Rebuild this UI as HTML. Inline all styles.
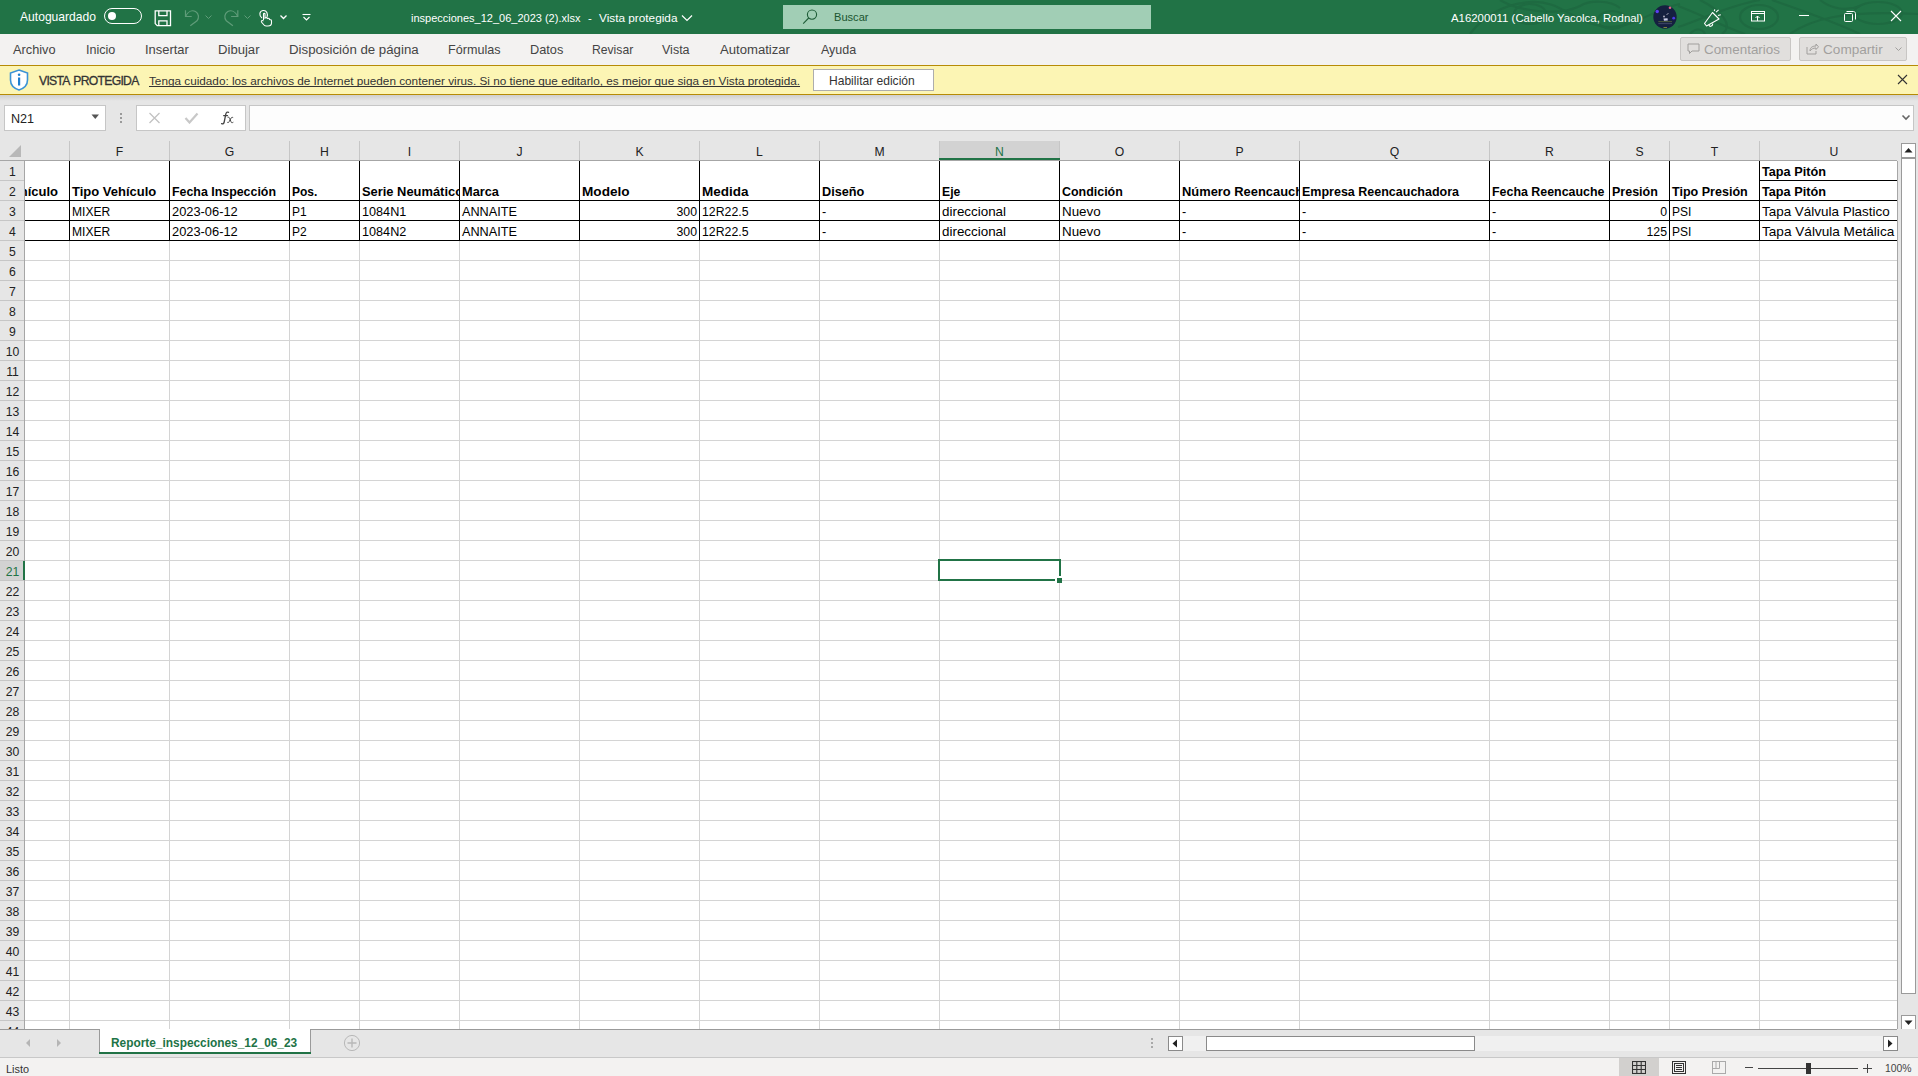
<!DOCTYPE html>
<html><head><meta charset="utf-8"><style>
html,body{margin:0;padding:0;}
body{width:1918px;height:1076px;position:relative;overflow:hidden;background:#fff;font-family:"Liberation Sans", sans-serif;}
.r{position:absolute;box-sizing:content-box;}
.t{position:absolute;white-space:nowrap;line-height:1;}
svg.r{display:block;}
</style></head><body>
<div class="r" style="left:0px;top:0px;width:1918px;height:34px;background:#217346;"></div>
<svg class="r" style="left:0;top:0" width="1918" height="34" viewBox="0 0 1918 34"><g fill="none" stroke="#1e6a41" stroke-width="2.2" opacity="0.9">
<path d="M1470 34 C1480 20 1500 4 1530 2 C1560 0 1570 20 1600 26 C1630 32 1650 10 1680 4"/>
<path d="M1500 0 C1520 12 1560 16 1580 6 C1590 0 1610 0 1620 8"/>
<ellipse cx="1530" cy="14" rx="16" ry="10"/>
<ellipse cx="1612" cy="20" rx="14" ry="9"/>
<path d="M1678 6 C1700 14 1722 26 1745 34"/>
<path d="M1772 0 C1800 10 1830 20 1860 34"/>
<ellipse cx="1759" cy="17" rx="19" ry="12"/>
<ellipse cx="1878" cy="13" rx="24" ry="11"/>
<path d="M1678 27 C1700 20 1730 5 1760 0"/>
<path d="M1790 34 C1810 20 1840 10 1918 14"/>
<path d="M1700 0 C1720 10 1735 25 1722 34"/>
<path d="M1820 0 C1830 8 1845 12 1860 6"/>
<path d="M1690 34 C1695 28 1702 28 1705 34"/>
</g></svg>
<div class="t" style="left:20px;top:11.00px;font-size:12.1px;color:#fff;font-weight:normal;">Autoguardado</div>
<div class="r" style="left:104px;top:8px;width:36px;height:14px;border:1px solid #fff;border-radius:8px;"></div>
<div class="r" style="left:108px;top:12px;width:8px;height:8px;background:#fff;border-radius:50%;"></div>
<svg class="r" style="left:154px;top:10px" width="18" height="17" viewBox="0 0 18 17"><g fill="none" stroke="#fff" stroke-width="1.3">
<path d="M1.2 0.8 H16.5 V15.6 H3.2 L1.2 13.6 Z"/><path d="M4.8 0.8 V5.6 H13 V0.8"/><path d="M4.8 15.6 V10.8 H13 V15.6"/></g></svg>
<svg class="r" style="left:183px;top:9px" width="18" height="18" viewBox="0 0 18 18"><g fill="none" stroke="#5f9c79" stroke-width="1.2">
<path d="M2.5 1.3 V7.5 H8.7"/><path d="M2.5 7.5 C5 2.5 9 0.8 12.5 2.5 C16 4.5 16.3 9 14 11.8 L7.3 16.8"/></g></svg>
<svg class="r" style="left:204px;top:14px" width="9" height="6" viewBox="0 0 9 6"><path d="M1.5 1.5 L4.5 4.5 L7.5 1.5" fill="none" stroke="#5f9c79" stroke-width="1"/></svg>
<svg class="r" style="left:222px;top:9px" width="18" height="18" viewBox="0 0 18 18"><g fill="none" stroke="#5f9c79" stroke-width="1.2">
<path d="M15.8 1.3 V7.5 H9.1"/><path d="M15.8 7.5 C13.3 2.5 9.3 0.8 5.8 2.5 C2.3 4.5 2 9 4.3 11.8 L10.9 16.8"/></g></svg>
<svg class="r" style="left:243px;top:14px" width="9" height="6" viewBox="0 0 9 6"><path d="M1.5 1.5 L4.5 4.5 L7.5 1.5" fill="none" stroke="#5f9c79" stroke-width="1"/></svg>
<svg class="r" style="left:258px;top:9px" width="15" height="18" viewBox="0 0 15 18"><g fill="none" stroke="#fff" stroke-width="1.1">
<path d="M4 9 C1 7 1 2 5 1.5 C9 1 10 5 9 8"/><path d="M5.5 11 V5 C5.5 4 7 4 7 5 V9 C8 8.5 9 8.5 9.5 9.5 C10.5 9 11.5 9.5 11.5 10.5 C12.5 10.3 13.5 11 13.5 12 V14 C13.5 16 12 17 10 17 H8 C6 17 5 15 3.5 13 C3 12 4 11 5.5 12"/></g></svg>
<svg class="r" style="left:279px;top:14px" width="9" height="6" viewBox="0 0 9 6"><path d="M1.5 1.5 L4.5 4.5 L7.5 1.5" fill="none" stroke="#fff" stroke-width="1.3"/></svg>
<svg class="r" style="left:302px;top:13px" width="9" height="9" viewBox="0 0 9 9"><g fill="none" stroke="#fff" stroke-width="1.1"><path d="M0.5 1.5 H8.5"/><path d="M1.5 4 L4.5 7 L7.5 4"/></g></svg>
<div class="t" style="left:411px;top:13.00px;font-size:11.0px;color:#fff;font-weight:normal;">inspecciones_12_06_2023 (2).xlsx</div>
<div class="t" style="left:588px;top:13.00px;font-size:11.5px;color:#fff;font-weight:normal;">-</div>
<div class="t" style="left:599px;top:13.00px;font-size:11.8px;color:#fff;font-weight:normal;">Vista protegida</div>
<svg class="r" style="left:681px;top:14px" width="12" height="8" viewBox="0 0 12 8"><path d="M1 1.5 L6 6.5 L11 1.5" fill="none" stroke="#fff" stroke-width="1.2"/></svg>
<div class="r" style="left:783px;top:5px;width:368px;height:24px;background:#a1ceb5;"></div>
<svg class="r" style="left:802px;top:8px" width="16" height="17" viewBox="0 0 16 17"><g fill="none" stroke="#1e5c37" stroke-width="1.1"><circle cx="10" cy="6.6" r="4.6"/><path d="M6.7 10 L1.2 15.6"/></g></svg>
<div class="t" style="left:834px;top:12.00px;font-size:11.1px;color:#1a5530;font-weight:normal;">Buscar</div>
<div class="t" style="left:1451px;top:13.00px;font-size:11.4px;color:#fff;font-weight:normal;">A16200011 (Cabello Yacolca, Rodnal)</div>
<svg class="r" style="left:1653px;top:5px" width="24" height="24" viewBox="0 0 24 24"><circle cx="12" cy="12" r="11.7" fill="#152040"/><circle cx="4.2" cy="6.5" r="1.7" fill="#5b3df2"/><circle cx="17" cy="2.8" r="1.3" fill="#e06585"/><circle cx="20.7" cy="13.2" r="1.4" fill="#4a3ae8"/><path d="M10.5 13.5 L14.5 13.2 L14.8 15.5 L11 15.8 Z" fill="#c8cbe8"/><circle cx="11" cy="11.5" r="1" fill="#aab"/><path d="M13.5 10 L15.5 8" stroke="#bbc" stroke-width="0.8"/><rect x="5.3" y="16.3" width="13.7" height="0.8" fill="#5a6a38"/><rect x="5.3" y="18.3" width="13.7" height="0.8" fill="#4a5070"/><rect x="10.5" y="22" width="3.5" height="0.9" fill="#8a9040"/></svg>
<svg class="r" style="left:1703px;top:9px" width="18" height="18" viewBox="0 0 18 18"><g fill="none" stroke="#fff" stroke-width="1.1">
<path d="M1.5 14.5 L9.5 3.5 L16 10 L3.5 17 Z" stroke-linejoin="round"/><path d="M6 15.8 C6 18 9.5 18 9.8 14.6"/><path d="M13 3.2 L15.6 0.8"/><path d="M15 6.5 L17.8 5.8"/><path d="M11.3 2 L11.8 0.3"/></g></svg>
<svg class="r" style="left:1751px;top:11px" width="14" height="11" viewBox="0 0 14 11"><g fill="none" stroke="#fff" stroke-width="1"><rect x="0.5" y="0.5" width="13" height="9.5"/><path d="M0.5 2.5 H13.5"/><path d="M6.5 10 V5 M4.5 7 L6.5 5 L8.5 7"/></g></svg>
<div class="r" style="left:1799px;top:15px;width:10px;height:1px;background:#fff;"></div>
<svg class="r" style="left:1844px;top:11px" width="12" height="11" viewBox="0 0 12 11"><g fill="none" stroke="#fff" stroke-width="1"><rect x="0.5" y="2.5" width="8" height="8" rx="1"/><path d="M2.5 0.5 H9.5 C10.5 0.5 11.5 1.5 11.5 2.5 V8.5"/></g></svg>
<svg class="r" style="left:1890px;top:10px" width="12" height="12" viewBox="0 0 12 12"><g stroke="#fff" stroke-width="1.1"><path d="M1 1 L11 11 M11 1 L1 11"/></g></svg>
<div class="r" style="left:0px;top:34px;width:1918px;height:31px;background:#f3f2f1;"></div>
<div class="t" style="left:13px;top:44.00px;font-size:12.75px;color:#444;font-weight:normal;">Archivo</div>
<div class="t" style="left:86px;top:44.00px;font-size:12.56px;color:#444;font-weight:normal;">Inicio</div>
<div class="t" style="left:145px;top:44.00px;font-size:12.93px;color:#444;font-weight:normal;">Insertar</div>
<div class="t" style="left:218px;top:43.00px;font-size:13.11px;color:#444;font-weight:normal;">Dibujar</div>
<div class="t" style="left:289px;top:43.00px;font-size:13.26px;color:#444;font-weight:normal;">Disposición de página</div>
<div class="t" style="left:448px;top:44.00px;font-size:12.6px;color:#444;font-weight:normal;">Fórmulas</div>
<div class="t" style="left:530px;top:44.00px;font-size:12.75px;color:#444;font-weight:normal;">Datos</div>
<div class="t" style="left:592px;top:44.00px;font-size:12.16px;color:#444;font-weight:normal;">Revisar</div>
<div class="t" style="left:662px;top:44.00px;font-size:12.5px;color:#444;font-weight:normal;">Vista</div>
<div class="t" style="left:720px;top:43.00px;font-size:13.11px;color:#444;font-weight:normal;">Automatizar</div>
<div class="t" style="left:821px;top:44.00px;font-size:12.49px;color:#444;font-weight:normal;">Ayuda</div>
<div class="r" style="left:1680px;top:37px;width:109px;height:22px;background:#e1dfdd;border:1px solid #c8c6c4;border-radius:2px;"></div>
<svg class="r" style="left:1687px;top:43px" width="13" height="12" viewBox="0 0 13 12"><path d="M1 1 H12 V8 H5 L2.5 10.5 V8 H1 Z" fill="none" stroke="#a19f9d" stroke-width="1"/></svg>
<div class="t" style="left:1704px;top:43.00px;font-size:13.4px;color:#a19f9d;font-weight:normal;">Comentarios</div>
<div class="r" style="left:1799px;top:37px;width:106px;height:22px;background:#e1dfdd;border:1px solid #c8c6c4;border-radius:2px;"></div>
<svg class="r" style="left:1806px;top:42px" width="13" height="13" viewBox="0 0 13 13"><g fill="none" stroke="#a19f9d" stroke-width="1"><path d="M1 5 V12 H10 V9"/><path d="M4 9 C4 5 7 4 10 4 V2 L12.5 4.8 L10 7.5 V6 C7 6 5.5 7 4 9 Z"/></g></svg>
<div class="t" style="left:1823px;top:43.00px;font-size:13.6px;color:#a19f9d;font-weight:normal;">Compartir</div>
<svg class="r" style="left:1894px;top:46px" width="9" height="6" viewBox="0 0 9 6"><path d="M1.5 1.5 L4.5 4.5 L7.5 1.5" fill="none" stroke="#a19f9d" stroke-width="1"/></svg>
<div class="r" style="left:0px;top:65px;width:1918px;height:30px;background:#fcf5b4;border-top:1px solid #b68b06;border-bottom:1px solid #b68b06;box-sizing:border-box;"></div>
<svg class="r" style="left:9px;top:69px" width="20" height="22" viewBox="0 0 20 22"><path d="M10 1 L18.5 4 V11 C18.5 16 14.5 19.5 10 21 C5.5 19.5 1.5 16 1.5 11 V4 Z" fill="#fff" stroke="#3b93d6" stroke-width="1.6"/><rect x="9" y="8.5" width="2.2" height="8" fill="#1f7fcf"/><circle cx="10.1" cy="5.8" r="1.3" fill="#1f7fcf"/></svg>
<div class="t" style="left:39px;top:75.00px;font-size:12.2px;color:#333;font-weight:normal;letter-spacing:-0.72px;word-spacing:1.6px;-webkit-text-stroke:0.3px #333;">VISTA PROTEGIDA</div>
<div class="t" style="left:149px;top:75.00px;font-size:11.76px;color:#333;font-weight:normal;text-decoration:underline;text-underline-offset:1px;text-decoration-skip-ink:none;">Tenga cuidado: los archivos de Internet pueden contener virus. Si no tiene que editarlo, es mejor que siga en Vista protegida.</div>
<div class="r" style="left:813px;top:69px;width:119px;height:20px;background:#fff;border:1px solid #adadad;"></div>
<div class="t" style="left:829px;top:75.00px;font-size:12.06px;color:#333;font-weight:normal;">Habilitar edición</div>
<svg class="r" style="left:1897px;top:74px" width="11" height="11" viewBox="0 0 11 11"><g stroke="#333" stroke-width="1.1"><path d="M1 1 L10 10 M10 1 L1 10"/></g></svg>
<div class="r" style="left:0px;top:95px;width:1918px;height:66px;background:#e6e6e6;"></div>
<div class="r" style="left:0;top:95px;width:1918px;height:6px;background:linear-gradient(#cfcfcf,#e6e6e6);"></div>
<div class="r" style="left:4px;top:105px;width:100px;height:24px;background:#fff;border:1px solid #c6c6c6;"></div>
<div class="t" style="left:11px;top:113.00px;font-size:12.6px;color:#222;font-weight:normal;">N21</div>
<svg class="r" style="left:91px;top:114px" width="9" height="6" viewBox="0 0 9 6"><path d="M0.5 0.5 H8 L4.25 5 Z" fill="#555"/></svg>
<div class="r" style="left:120px;top:113px;width:2px;height:2px;background:#9a9a9a;"></div>
<div class="r" style="left:120px;top:117px;width:2px;height:2px;background:#9a9a9a;"></div>
<div class="r" style="left:120px;top:121px;width:2px;height:2px;background:#9a9a9a;"></div>
<div class="r" style="left:136px;top:105px;width:108px;height:24px;background:#fff;border:1px solid #c6c6c6;"></div>
<svg class="r" style="left:148px;top:112px" width="13" height="12" viewBox="0 0 13 12"><g stroke="#c2c2c2" stroke-width="1.3"><path d="M1.5 1 L11.5 11 M11.5 1 L1.5 11"/></g></svg>
<svg class="r" style="left:184px;top:112px" width="15" height="12" viewBox="0 0 15 12"><path d="M1.5 6 L5.5 10.5 L13.5 1.5" fill="none" stroke="#c8c8c8" stroke-width="2.2"/></svg>
<svg class="r" style="left:220px;top:111px" width="15" height="14" viewBox="0 0 15 14"><g fill="none" stroke="#444" stroke-linecap="round"><path d="M8.6 1.3 C7.2 0.6 6.2 1.4 5.8 3.2 L4.2 11 C3.9 12.5 3 13.2 1.6 12.6" stroke-width="1.3"/><path d="M3.6 4.6 H7.6" stroke-width="1.1"/><path d="M8 6.2 C9 6 9.5 6.5 10 8 L11 10.8 C11.4 11.8 12 12 13 11.4 M12.8 6.4 C12 6 11.2 6.6 10.4 8.2 L9.2 10.6 C8.8 11.6 8.2 11.8 7.6 11.5" stroke-width="1"/></g></svg>
<div class="r" style="left:249px;top:105px;width:1663px;height:24px;background:#fdfdfd;border:1px solid #c6c6c6;"></div>
<svg class="r" style="left:1901px;top:114px" width="10" height="7" viewBox="0 0 10 7"><path d="M1.5 1.5 L5 5 L8.5 1.5" fill="none" stroke="#666" stroke-width="1.6"/></svg>
<div class="r" style="left:25px;top:161px;width:1872px;height:868px;background:#fff;"></div>
<div class="r" style="left:1759px;top:180px;width:138px;height:1px;background:#d4d4d4;"></div>
<div class="r" style="left:25px;top:200px;width:1872px;height:1px;background:#d4d4d4;"></div>
<div class="r" style="left:25px;top:220px;width:1872px;height:1px;background:#d4d4d4;"></div>
<div class="r" style="left:25px;top:240px;width:1872px;height:1px;background:#d4d4d4;"></div>
<div class="r" style="left:25px;top:260px;width:1872px;height:1px;background:#d4d4d4;"></div>
<div class="r" style="left:25px;top:280px;width:1872px;height:1px;background:#d4d4d4;"></div>
<div class="r" style="left:25px;top:300px;width:1872px;height:1px;background:#d4d4d4;"></div>
<div class="r" style="left:25px;top:320px;width:1872px;height:1px;background:#d4d4d4;"></div>
<div class="r" style="left:25px;top:340px;width:1872px;height:1px;background:#d4d4d4;"></div>
<div class="r" style="left:25px;top:360px;width:1872px;height:1px;background:#d4d4d4;"></div>
<div class="r" style="left:25px;top:380px;width:1872px;height:1px;background:#d4d4d4;"></div>
<div class="r" style="left:25px;top:400px;width:1872px;height:1px;background:#d4d4d4;"></div>
<div class="r" style="left:25px;top:420px;width:1872px;height:1px;background:#d4d4d4;"></div>
<div class="r" style="left:25px;top:440px;width:1872px;height:1px;background:#d4d4d4;"></div>
<div class="r" style="left:25px;top:460px;width:1872px;height:1px;background:#d4d4d4;"></div>
<div class="r" style="left:25px;top:480px;width:1872px;height:1px;background:#d4d4d4;"></div>
<div class="r" style="left:25px;top:500px;width:1872px;height:1px;background:#d4d4d4;"></div>
<div class="r" style="left:25px;top:520px;width:1872px;height:1px;background:#d4d4d4;"></div>
<div class="r" style="left:25px;top:540px;width:1872px;height:1px;background:#d4d4d4;"></div>
<div class="r" style="left:25px;top:560px;width:1872px;height:1px;background:#d4d4d4;"></div>
<div class="r" style="left:25px;top:580px;width:1872px;height:1px;background:#d4d4d4;"></div>
<div class="r" style="left:25px;top:600px;width:1872px;height:1px;background:#d4d4d4;"></div>
<div class="r" style="left:25px;top:620px;width:1872px;height:1px;background:#d4d4d4;"></div>
<div class="r" style="left:25px;top:640px;width:1872px;height:1px;background:#d4d4d4;"></div>
<div class="r" style="left:25px;top:660px;width:1872px;height:1px;background:#d4d4d4;"></div>
<div class="r" style="left:25px;top:680px;width:1872px;height:1px;background:#d4d4d4;"></div>
<div class="r" style="left:25px;top:700px;width:1872px;height:1px;background:#d4d4d4;"></div>
<div class="r" style="left:25px;top:720px;width:1872px;height:1px;background:#d4d4d4;"></div>
<div class="r" style="left:25px;top:740px;width:1872px;height:1px;background:#d4d4d4;"></div>
<div class="r" style="left:25px;top:760px;width:1872px;height:1px;background:#d4d4d4;"></div>
<div class="r" style="left:25px;top:780px;width:1872px;height:1px;background:#d4d4d4;"></div>
<div class="r" style="left:25px;top:800px;width:1872px;height:1px;background:#d4d4d4;"></div>
<div class="r" style="left:25px;top:820px;width:1872px;height:1px;background:#d4d4d4;"></div>
<div class="r" style="left:25px;top:840px;width:1872px;height:1px;background:#d4d4d4;"></div>
<div class="r" style="left:25px;top:860px;width:1872px;height:1px;background:#d4d4d4;"></div>
<div class="r" style="left:25px;top:880px;width:1872px;height:1px;background:#d4d4d4;"></div>
<div class="r" style="left:25px;top:900px;width:1872px;height:1px;background:#d4d4d4;"></div>
<div class="r" style="left:25px;top:920px;width:1872px;height:1px;background:#d4d4d4;"></div>
<div class="r" style="left:25px;top:940px;width:1872px;height:1px;background:#d4d4d4;"></div>
<div class="r" style="left:25px;top:960px;width:1872px;height:1px;background:#d4d4d4;"></div>
<div class="r" style="left:25px;top:980px;width:1872px;height:1px;background:#d4d4d4;"></div>
<div class="r" style="left:25px;top:1000px;width:1872px;height:1px;background:#d4d4d4;"></div>
<div class="r" style="left:25px;top:1020px;width:1872px;height:1px;background:#d4d4d4;"></div>
<div class="r" style="left:69px;top:161px;width:1px;height:868px;background:#d4d4d4;"></div>
<div class="r" style="left:169px;top:161px;width:1px;height:868px;background:#d4d4d4;"></div>
<div class="r" style="left:289px;top:161px;width:1px;height:868px;background:#d4d4d4;"></div>
<div class="r" style="left:359px;top:161px;width:1px;height:868px;background:#d4d4d4;"></div>
<div class="r" style="left:459px;top:161px;width:1px;height:868px;background:#d4d4d4;"></div>
<div class="r" style="left:579px;top:161px;width:1px;height:868px;background:#d4d4d4;"></div>
<div class="r" style="left:699px;top:161px;width:1px;height:868px;background:#d4d4d4;"></div>
<div class="r" style="left:819px;top:161px;width:1px;height:868px;background:#d4d4d4;"></div>
<div class="r" style="left:939px;top:161px;width:1px;height:868px;background:#d4d4d4;"></div>
<div class="r" style="left:1059px;top:161px;width:1px;height:868px;background:#d4d4d4;"></div>
<div class="r" style="left:1179px;top:161px;width:1px;height:868px;background:#d4d4d4;"></div>
<div class="r" style="left:1299px;top:161px;width:1px;height:868px;background:#d4d4d4;"></div>
<div class="r" style="left:1489px;top:161px;width:1px;height:868px;background:#d4d4d4;"></div>
<div class="r" style="left:1609px;top:161px;width:1px;height:868px;background:#d4d4d4;"></div>
<div class="r" style="left:1669px;top:161px;width:1px;height:868px;background:#d4d4d4;"></div>
<div class="r" style="left:1759px;top:161px;width:1px;height:868px;background:#d4d4d4;"></div>
<div class="r" style="left:0px;top:141px;width:1897px;height:19px;background:#e6e6e6;"></div>
<div class="r" style="left:939px;top:141px;width:120px;height:19px;background:#d2d2d2;"></div>
<div class="r" style="left:69px;top:141px;width:1px;height:19px;background:#c6c6c6;"></div>
<div class="t" style="left:-80.5px;width:400px;text-align:center;top:146.00px;font-size:12.2px;color:#222;font-weight:normal;">F</div>
<div class="r" style="left:169px;top:141px;width:1px;height:19px;background:#c6c6c6;"></div>
<div class="t" style="left:29.5px;width:400px;text-align:center;top:146.00px;font-size:12.2px;color:#222;font-weight:normal;">G</div>
<div class="r" style="left:289px;top:141px;width:1px;height:19px;background:#c6c6c6;"></div>
<div class="t" style="left:124.5px;width:400px;text-align:center;top:146.00px;font-size:12.2px;color:#222;font-weight:normal;">H</div>
<div class="r" style="left:359px;top:141px;width:1px;height:19px;background:#c6c6c6;"></div>
<div class="t" style="left:209.5px;width:400px;text-align:center;top:146.00px;font-size:12.2px;color:#222;font-weight:normal;">I</div>
<div class="r" style="left:459px;top:141px;width:1px;height:19px;background:#c6c6c6;"></div>
<div class="t" style="left:319.5px;width:400px;text-align:center;top:146.00px;font-size:12.2px;color:#222;font-weight:normal;">J</div>
<div class="r" style="left:579px;top:141px;width:1px;height:19px;background:#c6c6c6;"></div>
<div class="t" style="left:439.5px;width:400px;text-align:center;top:146.00px;font-size:12.2px;color:#222;font-weight:normal;">K</div>
<div class="r" style="left:699px;top:141px;width:1px;height:19px;background:#c6c6c6;"></div>
<div class="t" style="left:559.5px;width:400px;text-align:center;top:146.00px;font-size:12.2px;color:#222;font-weight:normal;">L</div>
<div class="r" style="left:819px;top:141px;width:1px;height:19px;background:#c6c6c6;"></div>
<div class="t" style="left:679.5px;width:400px;text-align:center;top:146.00px;font-size:12.2px;color:#222;font-weight:normal;">M</div>
<div class="r" style="left:939px;top:141px;width:1px;height:19px;background:#c6c6c6;"></div>
<div class="t" style="left:799.5px;width:400px;text-align:center;top:146.00px;font-size:12.2px;color:#217346;font-weight:normal;">N</div>
<div class="r" style="left:1059px;top:141px;width:1px;height:19px;background:#c6c6c6;"></div>
<div class="t" style="left:919.5px;width:400px;text-align:center;top:146.00px;font-size:12.2px;color:#222;font-weight:normal;">O</div>
<div class="r" style="left:1179px;top:141px;width:1px;height:19px;background:#c6c6c6;"></div>
<div class="t" style="left:1039.5px;width:400px;text-align:center;top:146.00px;font-size:12.2px;color:#222;font-weight:normal;">P</div>
<div class="r" style="left:1299px;top:141px;width:1px;height:19px;background:#c6c6c6;"></div>
<div class="t" style="left:1194.5px;width:400px;text-align:center;top:146.00px;font-size:12.2px;color:#222;font-weight:normal;">Q</div>
<div class="r" style="left:1489px;top:141px;width:1px;height:19px;background:#c6c6c6;"></div>
<div class="t" style="left:1349.5px;width:400px;text-align:center;top:146.00px;font-size:12.2px;color:#222;font-weight:normal;">R</div>
<div class="r" style="left:1609px;top:141px;width:1px;height:19px;background:#c6c6c6;"></div>
<div class="t" style="left:1439.5px;width:400px;text-align:center;top:146.00px;font-size:12.2px;color:#222;font-weight:normal;">S</div>
<div class="r" style="left:1669px;top:141px;width:1px;height:19px;background:#c6c6c6;"></div>
<div class="t" style="left:1514.5px;width:400px;text-align:center;top:146.00px;font-size:12.2px;color:#222;font-weight:normal;">T</div>
<div class="r" style="left:1759px;top:141px;width:1px;height:19px;background:#c6c6c6;"></div>
<div class="t" style="left:1634px;width:400px;text-align:center;top:146.00px;font-size:12.2px;color:#222;font-weight:normal;">U</div>
<div class="r" style="left:1059px;top:141px;width:1px;height:19px;background:#c6c6c6;"></div>
<div class="r" style="left:939px;top:158px;width:121px;height:2px;background:#217346;"></div>
<div class="r" style="left:0px;top:160px;width:1897px;height:1px;background:#a6a6a6;"></div>
<svg class="r" style="left:8px;top:144px" width="14" height="14" viewBox="0 0 14 14"><path d="M13 1 V13 H1 Z" fill="#b8b8b8"/></svg>
<div class="r" style="left:0px;top:161px;width:24px;height:868px;background:#e6e6e6;"></div>
<div class="r" style="left:0px;top:561px;width:24px;height:19px;background:#d2d2d2;"></div>
<div class="r" style="left:0px;top:180px;width:24px;height:1px;background:#c6c6c6;"></div>
<div class="t" style="left:-187.5px;width:400px;text-align:center;top:166.00px;font-size:12.2px;color:#222;font-weight:normal;">1</div>
<div class="r" style="left:0px;top:200px;width:24px;height:1px;background:#c6c6c6;"></div>
<div class="t" style="left:-187.5px;width:400px;text-align:center;top:186.00px;font-size:12.2px;color:#222;font-weight:normal;">2</div>
<div class="r" style="left:0px;top:220px;width:24px;height:1px;background:#c6c6c6;"></div>
<div class="t" style="left:-187.5px;width:400px;text-align:center;top:206.00px;font-size:12.2px;color:#222;font-weight:normal;">3</div>
<div class="r" style="left:0px;top:240px;width:24px;height:1px;background:#c6c6c6;"></div>
<div class="t" style="left:-187.5px;width:400px;text-align:center;top:226.00px;font-size:12.2px;color:#222;font-weight:normal;">4</div>
<div class="r" style="left:0px;top:260px;width:24px;height:1px;background:#c6c6c6;"></div>
<div class="t" style="left:-187.5px;width:400px;text-align:center;top:246.00px;font-size:12.2px;color:#222;font-weight:normal;">5</div>
<div class="r" style="left:0px;top:280px;width:24px;height:1px;background:#c6c6c6;"></div>
<div class="t" style="left:-187.5px;width:400px;text-align:center;top:266.00px;font-size:12.2px;color:#222;font-weight:normal;">6</div>
<div class="r" style="left:0px;top:300px;width:24px;height:1px;background:#c6c6c6;"></div>
<div class="t" style="left:-187.5px;width:400px;text-align:center;top:286.00px;font-size:12.2px;color:#222;font-weight:normal;">7</div>
<div class="r" style="left:0px;top:320px;width:24px;height:1px;background:#c6c6c6;"></div>
<div class="t" style="left:-187.5px;width:400px;text-align:center;top:306.00px;font-size:12.2px;color:#222;font-weight:normal;">8</div>
<div class="r" style="left:0px;top:340px;width:24px;height:1px;background:#c6c6c6;"></div>
<div class="t" style="left:-187.5px;width:400px;text-align:center;top:326.00px;font-size:12.2px;color:#222;font-weight:normal;">9</div>
<div class="r" style="left:0px;top:360px;width:24px;height:1px;background:#c6c6c6;"></div>
<div class="t" style="left:-187.5px;width:400px;text-align:center;top:346.00px;font-size:12.2px;color:#222;font-weight:normal;">10</div>
<div class="r" style="left:0px;top:380px;width:24px;height:1px;background:#c6c6c6;"></div>
<div class="t" style="left:-187.5px;width:400px;text-align:center;top:366.00px;font-size:12.2px;color:#222;font-weight:normal;">11</div>
<div class="r" style="left:0px;top:400px;width:24px;height:1px;background:#c6c6c6;"></div>
<div class="t" style="left:-187.5px;width:400px;text-align:center;top:386.00px;font-size:12.2px;color:#222;font-weight:normal;">12</div>
<div class="r" style="left:0px;top:420px;width:24px;height:1px;background:#c6c6c6;"></div>
<div class="t" style="left:-187.5px;width:400px;text-align:center;top:406.00px;font-size:12.2px;color:#222;font-weight:normal;">13</div>
<div class="r" style="left:0px;top:440px;width:24px;height:1px;background:#c6c6c6;"></div>
<div class="t" style="left:-187.5px;width:400px;text-align:center;top:426.00px;font-size:12.2px;color:#222;font-weight:normal;">14</div>
<div class="r" style="left:0px;top:460px;width:24px;height:1px;background:#c6c6c6;"></div>
<div class="t" style="left:-187.5px;width:400px;text-align:center;top:446.00px;font-size:12.2px;color:#222;font-weight:normal;">15</div>
<div class="r" style="left:0px;top:480px;width:24px;height:1px;background:#c6c6c6;"></div>
<div class="t" style="left:-187.5px;width:400px;text-align:center;top:466.00px;font-size:12.2px;color:#222;font-weight:normal;">16</div>
<div class="r" style="left:0px;top:500px;width:24px;height:1px;background:#c6c6c6;"></div>
<div class="t" style="left:-187.5px;width:400px;text-align:center;top:486.00px;font-size:12.2px;color:#222;font-weight:normal;">17</div>
<div class="r" style="left:0px;top:520px;width:24px;height:1px;background:#c6c6c6;"></div>
<div class="t" style="left:-187.5px;width:400px;text-align:center;top:506.00px;font-size:12.2px;color:#222;font-weight:normal;">18</div>
<div class="r" style="left:0px;top:540px;width:24px;height:1px;background:#c6c6c6;"></div>
<div class="t" style="left:-187.5px;width:400px;text-align:center;top:526.00px;font-size:12.2px;color:#222;font-weight:normal;">19</div>
<div class="r" style="left:0px;top:560px;width:24px;height:1px;background:#c6c6c6;"></div>
<div class="t" style="left:-187.5px;width:400px;text-align:center;top:546.00px;font-size:12.2px;color:#222;font-weight:normal;">20</div>
<div class="r" style="left:0px;top:580px;width:24px;height:1px;background:#c6c6c6;"></div>
<div class="t" style="left:-187.5px;width:400px;text-align:center;top:566.00px;font-size:12.2px;color:#217346;font-weight:normal;">21</div>
<div class="r" style="left:0px;top:600px;width:24px;height:1px;background:#c6c6c6;"></div>
<div class="t" style="left:-187.5px;width:400px;text-align:center;top:586.00px;font-size:12.2px;color:#222;font-weight:normal;">22</div>
<div class="r" style="left:0px;top:620px;width:24px;height:1px;background:#c6c6c6;"></div>
<div class="t" style="left:-187.5px;width:400px;text-align:center;top:606.00px;font-size:12.2px;color:#222;font-weight:normal;">23</div>
<div class="r" style="left:0px;top:640px;width:24px;height:1px;background:#c6c6c6;"></div>
<div class="t" style="left:-187.5px;width:400px;text-align:center;top:626.00px;font-size:12.2px;color:#222;font-weight:normal;">24</div>
<div class="r" style="left:0px;top:660px;width:24px;height:1px;background:#c6c6c6;"></div>
<div class="t" style="left:-187.5px;width:400px;text-align:center;top:646.00px;font-size:12.2px;color:#222;font-weight:normal;">25</div>
<div class="r" style="left:0px;top:680px;width:24px;height:1px;background:#c6c6c6;"></div>
<div class="t" style="left:-187.5px;width:400px;text-align:center;top:666.00px;font-size:12.2px;color:#222;font-weight:normal;">26</div>
<div class="r" style="left:0px;top:700px;width:24px;height:1px;background:#c6c6c6;"></div>
<div class="t" style="left:-187.5px;width:400px;text-align:center;top:686.00px;font-size:12.2px;color:#222;font-weight:normal;">27</div>
<div class="r" style="left:0px;top:720px;width:24px;height:1px;background:#c6c6c6;"></div>
<div class="t" style="left:-187.5px;width:400px;text-align:center;top:706.00px;font-size:12.2px;color:#222;font-weight:normal;">28</div>
<div class="r" style="left:0px;top:740px;width:24px;height:1px;background:#c6c6c6;"></div>
<div class="t" style="left:-187.5px;width:400px;text-align:center;top:726.00px;font-size:12.2px;color:#222;font-weight:normal;">29</div>
<div class="r" style="left:0px;top:760px;width:24px;height:1px;background:#c6c6c6;"></div>
<div class="t" style="left:-187.5px;width:400px;text-align:center;top:746.00px;font-size:12.2px;color:#222;font-weight:normal;">30</div>
<div class="r" style="left:0px;top:780px;width:24px;height:1px;background:#c6c6c6;"></div>
<div class="t" style="left:-187.5px;width:400px;text-align:center;top:766.00px;font-size:12.2px;color:#222;font-weight:normal;">31</div>
<div class="r" style="left:0px;top:800px;width:24px;height:1px;background:#c6c6c6;"></div>
<div class="t" style="left:-187.5px;width:400px;text-align:center;top:786.00px;font-size:12.2px;color:#222;font-weight:normal;">32</div>
<div class="r" style="left:0px;top:820px;width:24px;height:1px;background:#c6c6c6;"></div>
<div class="t" style="left:-187.5px;width:400px;text-align:center;top:806.00px;font-size:12.2px;color:#222;font-weight:normal;">33</div>
<div class="r" style="left:0px;top:840px;width:24px;height:1px;background:#c6c6c6;"></div>
<div class="t" style="left:-187.5px;width:400px;text-align:center;top:826.00px;font-size:12.2px;color:#222;font-weight:normal;">34</div>
<div class="r" style="left:0px;top:860px;width:24px;height:1px;background:#c6c6c6;"></div>
<div class="t" style="left:-187.5px;width:400px;text-align:center;top:846.00px;font-size:12.2px;color:#222;font-weight:normal;">35</div>
<div class="r" style="left:0px;top:880px;width:24px;height:1px;background:#c6c6c6;"></div>
<div class="t" style="left:-187.5px;width:400px;text-align:center;top:866.00px;font-size:12.2px;color:#222;font-weight:normal;">36</div>
<div class="r" style="left:0px;top:900px;width:24px;height:1px;background:#c6c6c6;"></div>
<div class="t" style="left:-187.5px;width:400px;text-align:center;top:886.00px;font-size:12.2px;color:#222;font-weight:normal;">37</div>
<div class="r" style="left:0px;top:920px;width:24px;height:1px;background:#c6c6c6;"></div>
<div class="t" style="left:-187.5px;width:400px;text-align:center;top:906.00px;font-size:12.2px;color:#222;font-weight:normal;">38</div>
<div class="r" style="left:0px;top:940px;width:24px;height:1px;background:#c6c6c6;"></div>
<div class="t" style="left:-187.5px;width:400px;text-align:center;top:926.00px;font-size:12.2px;color:#222;font-weight:normal;">39</div>
<div class="r" style="left:0px;top:960px;width:24px;height:1px;background:#c6c6c6;"></div>
<div class="t" style="left:-187.5px;width:400px;text-align:center;top:946.00px;font-size:12.2px;color:#222;font-weight:normal;">40</div>
<div class="r" style="left:0px;top:980px;width:24px;height:1px;background:#c6c6c6;"></div>
<div class="t" style="left:-187.5px;width:400px;text-align:center;top:966.00px;font-size:12.2px;color:#222;font-weight:normal;">41</div>
<div class="r" style="left:0px;top:1000px;width:24px;height:1px;background:#c6c6c6;"></div>
<div class="t" style="left:-187.5px;width:400px;text-align:center;top:986.00px;font-size:12.2px;color:#222;font-weight:normal;">42</div>
<div class="r" style="left:0px;top:1020px;width:24px;height:1px;background:#c6c6c6;"></div>
<div class="t" style="left:-187.5px;width:400px;text-align:center;top:1006.00px;font-size:12.2px;color:#222;font-weight:normal;">43</div>
<div class="t" style="left:-187.5px;width:400px;text-align:center;top:1026.00px;font-size:12.2px;color:#222;font-weight:normal;">44</div>
<div class="r" style="left:24px;top:161px;width:1px;height:868px;background:#a6a6a6;"></div>
<div class="r" style="left:23px;top:561px;width:2px;height:19px;background:#217346;"></div>
<div class="r" style="left:69px;top:161px;width:1px;height:80px;background:#000;"></div>
<div class="r" style="left:169px;top:161px;width:1px;height:80px;background:#000;"></div>
<div class="r" style="left:289px;top:161px;width:1px;height:80px;background:#000;"></div>
<div class="r" style="left:359px;top:161px;width:1px;height:80px;background:#000;"></div>
<div class="r" style="left:459px;top:161px;width:1px;height:80px;background:#000;"></div>
<div class="r" style="left:579px;top:161px;width:1px;height:80px;background:#000;"></div>
<div class="r" style="left:699px;top:161px;width:1px;height:80px;background:#000;"></div>
<div class="r" style="left:819px;top:161px;width:1px;height:80px;background:#000;"></div>
<div class="r" style="left:939px;top:161px;width:1px;height:80px;background:#000;"></div>
<div class="r" style="left:1059px;top:161px;width:1px;height:80px;background:#000;"></div>
<div class="r" style="left:1179px;top:161px;width:1px;height:80px;background:#000;"></div>
<div class="r" style="left:1299px;top:161px;width:1px;height:80px;background:#000;"></div>
<div class="r" style="left:1489px;top:161px;width:1px;height:80px;background:#000;"></div>
<div class="r" style="left:1609px;top:161px;width:1px;height:80px;background:#000;"></div>
<div class="r" style="left:1669px;top:161px;width:1px;height:80px;background:#000;"></div>
<div class="r" style="left:1759px;top:161px;width:1px;height:80px;background:#000;"></div>
<div class="r" style="left:25px;top:200px;width:1872px;height:1px;background:#000;"></div>
<div class="r" style="left:25px;top:220px;width:1872px;height:1px;background:#000;"></div>
<div class="r" style="left:25px;top:240px;width:1872px;height:1px;background:#000;"></div>
<div class="r" style="left:1760px;top:180px;width:137px;height:1px;background:#000;"></div>
<div class="r" style="left:25px;top:161px;width:44px;height:39px;overflow:hidden;"><div class="t" style="right:11px;top:24px;font-size:13px;font-weight:bold;color:#000;">Tipo Vehículo</div></div>
<div class="t" style="left:72px;top:185.00px;font-size:13.0px;color:#000;font-weight:bold;">Tipo Vehículo</div>
<div class="t" style="left:172px;top:186.00px;font-size:12.4px;color:#000;font-weight:bold;">Fecha Inspección</div>
<div class="t" style="left:292px;top:186.00px;font-size:12.0px;color:#000;font-weight:bold;">Pos.</div>
<div class="r" style="left:360px;top:161px;width:99px;height:39px;overflow:hidden;"><div class="t" style="left:2px;top:25px;font-size:12.9px;font-weight:bold;color:#000;">Serie Neumático</div></div>
<div class="t" style="left:462px;top:186.00px;font-size:12.8px;color:#000;font-weight:bold;">Marca</div>
<div class="t" style="left:582px;top:185.00px;font-size:13.6px;color:#000;font-weight:bold;">Modelo</div>
<div class="t" style="left:702px;top:185.00px;font-size:13.5px;color:#000;font-weight:bold;">Medida</div>
<div class="t" style="left:822px;top:186.00px;font-size:12.7px;color:#000;font-weight:bold;">Diseño</div>
<div class="t" style="left:942px;top:186.00px;font-size:12.2px;color:#000;font-weight:bold;">Eje</div>
<div class="t" style="left:1062px;top:186.00px;font-size:12.45px;color:#000;font-weight:bold;">Condición</div>
<div class="r" style="left:1180px;top:161px;width:119px;height:39px;overflow:hidden;"><div class="t" style="left:2px;top:25px;font-size:12.9px;font-weight:bold;color:#000;">Número Reencauche</div></div>
<div class="t" style="left:1302px;top:186.00px;font-size:12.5px;color:#000;font-weight:bold;">Empresa Reencauchadora</div>
<div class="t" style="left:1492px;top:186.00px;font-size:12.42px;color:#000;font-weight:bold;">Fecha Reencauche</div>
<div class="t" style="left:1612px;top:186.00px;font-size:12.5px;color:#000;font-weight:bold;">Presión</div>
<div class="t" style="left:1672px;top:186.00px;font-size:12.55px;color:#000;font-weight:bold;">Tipo Presión</div>
<div class="t" style="left:1762px;top:186.00px;font-size:12.7px;color:#000;font-weight:bold;">Tapa Pitón</div>
<div class="t" style="left:1762px;top:166.00px;font-size:12.7px;color:#000;font-weight:bold;">Tapa Pitón</div>
<div class="t" style="left:72px;top:206.00px;font-size:12.1px;color:#000;font-weight:normal;">MIXER</div>
<div class="t" style="left:172px;top:206.00px;font-size:12.85px;color:#000;font-weight:normal;">2023-06-12</div>
<div class="t" style="left:292px;top:206.00px;font-size:12px;color:#000;font-weight:normal;">P1</div>
<div class="t" style="left:362px;top:206.00px;font-size:12.66px;color:#000;font-weight:normal;">1084N1</div>
<div class="t" style="left:462px;top:206.00px;font-size:12.7px;color:#000;font-weight:normal;">ANNAITE</div>
<div class="t" style="right:1221px;top:206.00px;font-size:12.3px;color:#000;font-weight:normal;">300</div>
<div class="t" style="left:702px;top:206.00px;font-size:12.3px;color:#000;font-weight:normal;">12R22.5</div>
<div class="t" style="left:822px;top:206.00px;font-size:12.7px;color:#000;font-weight:normal;">-</div>
<div class="t" style="left:942px;top:205.00px;font-size:13.4px;color:#000;font-weight:normal;">direccional</div>
<div class="t" style="left:1062px;top:205.00px;font-size:13.4px;color:#000;font-weight:normal;">Nuevo</div>
<div class="t" style="left:1182px;top:206.00px;font-size:12.7px;color:#000;font-weight:normal;">-</div>
<div class="t" style="left:1302px;top:206.00px;font-size:12.7px;color:#000;font-weight:normal;">-</div>
<div class="t" style="left:1492px;top:206.00px;font-size:12.7px;color:#000;font-weight:normal;">-</div>
<div class="t" style="right:251px;top:206.00px;font-size:12.3px;color:#000;font-weight:normal;">0</div>
<div class="t" style="left:1672px;top:206.00px;font-size:12px;color:#000;font-weight:normal;">PSI</div>
<div class="t" style="left:1762px;top:205.00px;font-size:13.45px;color:#000;font-weight:normal;">Tapa Válvula Plastico</div>
<div class="t" style="left:72px;top:226.00px;font-size:12.1px;color:#000;font-weight:normal;">MIXER</div>
<div class="t" style="left:172px;top:226.00px;font-size:12.85px;color:#000;font-weight:normal;">2023-06-12</div>
<div class="t" style="left:292px;top:226.00px;font-size:12px;color:#000;font-weight:normal;">P2</div>
<div class="t" style="left:362px;top:226.00px;font-size:12.66px;color:#000;font-weight:normal;">1084N2</div>
<div class="t" style="left:462px;top:226.00px;font-size:12.7px;color:#000;font-weight:normal;">ANNAITE</div>
<div class="t" style="right:1221px;top:226.00px;font-size:12.3px;color:#000;font-weight:normal;">300</div>
<div class="t" style="left:702px;top:226.00px;font-size:12.3px;color:#000;font-weight:normal;">12R22.5</div>
<div class="t" style="left:822px;top:226.00px;font-size:12.7px;color:#000;font-weight:normal;">-</div>
<div class="t" style="left:942px;top:225.00px;font-size:13.4px;color:#000;font-weight:normal;">direccional</div>
<div class="t" style="left:1062px;top:225.00px;font-size:13.4px;color:#000;font-weight:normal;">Nuevo</div>
<div class="t" style="left:1182px;top:226.00px;font-size:12.7px;color:#000;font-weight:normal;">-</div>
<div class="t" style="left:1302px;top:226.00px;font-size:12.7px;color:#000;font-weight:normal;">-</div>
<div class="t" style="left:1492px;top:226.00px;font-size:12.7px;color:#000;font-weight:normal;">-</div>
<div class="t" style="right:251px;top:226.00px;font-size:12.3px;color:#000;font-weight:normal;">125</div>
<div class="t" style="left:1672px;top:226.00px;font-size:12px;color:#000;font-weight:normal;">PSI</div>
<div class="t" style="left:1762px;top:225.00px;font-size:13.6px;color:#000;font-weight:normal;">Tapa Válvula Metálica</div>
<div class="r" style="left:938px;top:559px;width:119px;height:18px;border:2px solid #217346;"></div>
<div class="r" style="left:1055px;top:576px;width:7px;height:7px;background:#fff;"></div>
<div class="r" style="left:1057px;top:578px;width:5px;height:5px;background:#217346;"></div>
<div class="r" style="left:1897px;top:141px;width:21px;height:889px;background:#e6e6e6;"></div>
<div class="r" style="left:1897px;top:161px;width:1px;height:868px;background:#a6a6a6;"></div>
<div class="r" style="left:1901px;top:143px;width:13px;height:13px;background:#fff;border:1px solid #9a9a9a;"></div>
<svg class="r" style="left:1904px;top:146px" width="9" height="8" viewBox="0 0 9 8"><path d="M0.5 6.5 H8.5 L4.5 2 Z" fill="#222"/></svg>
<div class="r" style="left:1901px;top:158px;width:13px;height:834px;background:#fff;border:1px solid #9a9a9a;"></div>
<div class="r" style="left:1901px;top:1015px;width:13px;height:13px;background:#fff;border:1px solid #9a9a9a;"></div>
<svg class="r" style="left:1904px;top:1019px" width="9" height="8" viewBox="0 0 9 8"><path d="M0.5 1.5 H8.5 L4.5 6 Z" fill="#222"/></svg>
<div class="r" style="left:0px;top:1029px;width:1918px;height:28px;background:#e6e6e6;"></div>
<div class="r" style="left:0px;top:1029px;width:99px;height:1px;background:#9a9a9a;"></div>
<div class="r" style="left:311px;top:1029px;width:1586px;height:1px;background:#9a9a9a;"></div>
<svg class="r" style="left:24px;top:1038px" width="40" height="10" viewBox="0 0 40 10"><path d="M6 1 V9 L2 5 Z M33 1 V9 L37 5 Z" fill="#b5b5b5"/></svg>
<div class="r" style="left:99px;top:1029px;width:212px;height:25px;background:#9a9a9a;"></div>
<div class="r" style="left:100px;top:1029px;width:210px;height:23px;background:#fff;"></div>
<div class="r" style="left:99px;top:1052px;width:212px;height:2px;background:#217346;"></div>
<div class="t" style="left:111px;top:1038.00px;font-size:11.88px;color:#217346;font-weight:bold;">Reporte_inspecciones_12_06_23</div>
<svg class="r" style="left:343px;top:1034px" width="18" height="18" viewBox="0 0 18 18"><g fill="none" stroke="#b8b8b8" stroke-width="1"><circle cx="9" cy="9" r="7.6"/><path d="M9 4.5 V13.5 M4.5 9 H13.5" stroke-width="1.4"/></g></svg>
<div class="r" style="left:1151px;top:1038px;width:2px;height:2px;background:#a8a8a8;"></div>
<div class="r" style="left:1151px;top:1042px;width:2px;height:2px;background:#a8a8a8;"></div>
<div class="r" style="left:1151px;top:1046px;width:2px;height:2px;background:#a8a8a8;"></div>
<div class="r" style="left:1168px;top:1036px;width:730px;height:15px;background:#f0f0f0;"></div>
<div class="r" style="left:1168px;top:1036px;width:13px;height:13px;background:#fff;border:1px solid #8a8a8a;"></div>
<svg class="r" style="left:1171px;top:1039px" width="8" height="9" viewBox="0 0 8 9"><path d="M6 0.5 V8.5 L1.5 4.5 Z" fill="#222"/></svg>
<div class="r" style="left:1206px;top:1036px;width:267px;height:13px;background:#fff;border:1px solid #8a8a8a;"></div>
<div class="r" style="left:1883px;top:1036px;width:13px;height:13px;background:#fff;border:1px solid #8a8a8a;"></div>
<svg class="r" style="left:1886px;top:1039px" width="8" height="9" viewBox="0 0 8 9"><path d="M2 0.5 V8.5 L6.5 4.5 Z" fill="#222"/></svg>
<div class="r" style="left:0px;top:1057px;width:1918px;height:1px;background:#c8c8c8;"></div>
<div class="r" style="left:0px;top:1058px;width:1918px;height:18px;background:#f3f2f1;"></div>
<div class="t" style="left:6px;top:1064.00px;font-size:10.9px;color:#333;font-weight:normal;">Listo</div>
<div class="r" style="left:1619px;top:1058px;width:40px;height:18px;background:#d2d0ce;"></div>
<svg class="r" style="left:1632px;top:1061px" width="14" height="13" viewBox="0 0 14 13"><g fill="none" stroke="#333" stroke-width="1.1"><rect x="0.5" y="0.5" width="13" height="12"/><path d="M0.5 4.5 H13.5 M0.5 8.5 H13.5 M4.8 0.5 V12.5 M9.2 0.5 V12.5"/></g></svg>
<svg class="r" style="left:1672px;top:1061px" width="14" height="13" viewBox="0 0 14 13"><g fill="none" stroke="#333" stroke-width="1"><rect x="0.5" y="0.5" width="13" height="12"/><rect x="2.5" y="2.5" width="9" height="8"/><path d="M4 4.5 H10 M4 6.5 H10 M4 8.5 H10"/></g></svg>
<svg class="r" style="left:1712px;top:1061px" width="14" height="13" viewBox="0 0 14 13"><g fill="none" stroke="#aaa" stroke-width="1"><rect x="0.5" y="0.5" width="13" height="12"/><path d="M0.5 7.5 H7.5 V0.5 M4 0.5 V7.5"/></g></svg>
<div class="r" style="left:1745px;top:1067px;width:8px;height:1px;background:#444;"></div>
<div class="r" style="left:1758px;top:1068px;width:100px;height:1px;background:#444;"></div>
<div class="r" style="left:1806px;top:1063px;width:5px;height:11px;background:#333;"></div>
<div class="r" style="left:1863px;top:1068px;width:9px;height:1px;background:#444;"></div>
<div class="r" style="left:1867px;top:1064px;width:1px;height:9px;background:#444;"></div>
<div class="t" style="left:1885px;top:1064.00px;font-size:10.4px;color:#444;font-weight:normal;">100%</div>
</body></html>
